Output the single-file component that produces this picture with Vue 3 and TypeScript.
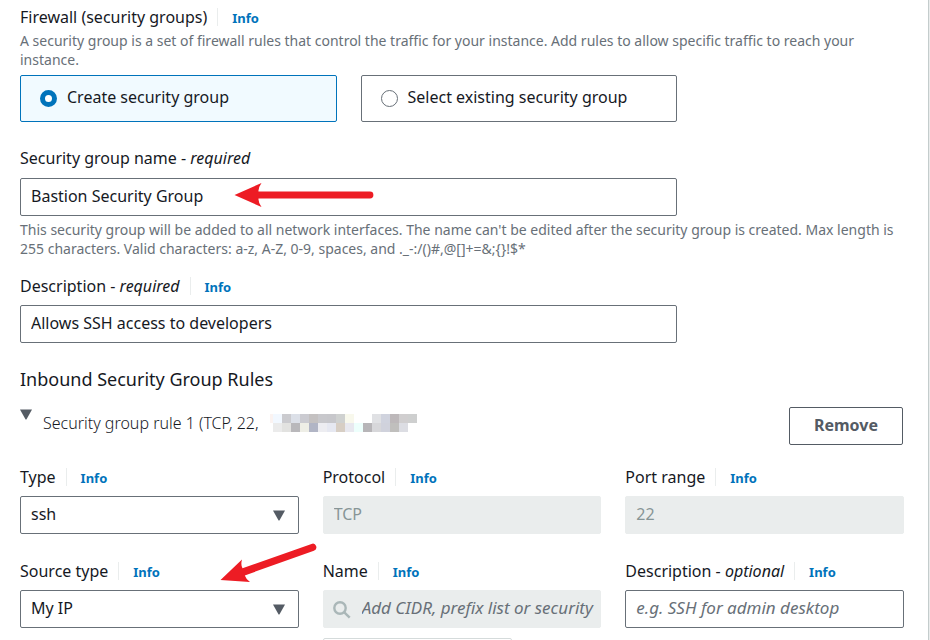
<script setup lang="ts">
import { ref } from 'vue'

const groupMode = ref<'create' | 'existing'>('create')
const groupName = ref('Bastion Security Group')
const groupDescription = ref('Allows SSH access to developers')
const ruleType = ref('ssh')
const sourceType = ref('My IP')
const ruleDescription = ref('')

interface Cell {
  x: number
  y: number
  w: number
  fill: string
}

// Redacted source address: two rows of 9px blocks after a 3px sliver.
const upper = ['#f2f8ff', '#cbcbcf', '#dce0e8', '#cbcbd1', '#c4c1c1', '#c8c8cc', '#c7c7cb', '#cfd1d0', '#f8f8ec', '', '', '#e0e1e4', '#d0d3de', '#bdb8ba', '#d0cecf', '#cecfcf']
const lower = ['#ebebeb', '#e2e2e0', '#b9b8bb', '#eeeee6', '#b1b5c5', '#ededf1', '#e6e8f1', '#d7cec4', '#e8e8ef', '#edfffc', '#b7b5b8', '#d7d7da', '#d0d2dc', '#c0bfbd', '#dcdde3', '']
const toCells = (row: string[], y: number): Cell[] =>
  row.map((fill, i) => ({ x: 3 + i * 9, y, w: 9, fill })).filter((c) => c.fill)
const cells: Cell[] = [{ x: 0, y: 0, w: 3, fill: '#fbf3f1' }, ...toCells(upper, 0), ...toCells(lower, 9)]
</script>

<template>
  <main class="panel">
    <fieldset class="group">
      <legend class="label-row">
        <span>Firewall (security groups)</span>
        <a class="info" href="#firewall">Info</a>
      </legend>
      <p class="hint">
        A security group is a set of firewall rules that control the traffic for your instance. Add rules to allow
        specific traffic to reach your instance.
      </p>
      <div class="tiles">
        <label class="tile" :class="{ selected: groupMode === 'create' }">
          <input v-model="groupMode" type="radio" name="mode" value="create" />
          <span>Create security group</span>
        </label>
        <label class="tile" :class="{ selected: groupMode === 'existing' }">
          <input v-model="groupMode" type="radio" name="mode" value="existing" />
          <span>Select existing security group</span>
        </label>
      </div>
    </fieldset>

    <section class="name-field">
      <div class="label-row">
        <label for="sg-name">Security group name - <em>required</em></label>
      </div>
      <div class="control wide">
        <input id="sg-name" v-model="groupName" class="box" type="text" />
        <svg class="arrow-name" viewBox="0 0 140 26" aria-hidden="true">
          <path d="M0.5 13 L27.5 1 Q24 6 24.5 9.6 H136 a3.4 3.4 0 0 1 0 6.8 H24.5 Q24 20 27.5 25 Z" />
        </svg>
      </div>
      <p class="hint">
        This security group will be added to all network interfaces. The name can't be edited after the security group
        is created. Max length is 255 characters. Valid characters: a-z, A-Z, 0-9, spaces, and ._-:/()#,@[]+=&amp;;{}!$*
      </p>
    </section>

    <section class="description-field">
      <div class="label-row">
        <label for="sg-desc">Description - <em>required</em></label>
        <a class="info" href="#description">Info</a>
      </div>
      <div class="control wide">
        <input id="sg-desc" v-model="groupDescription" class="box" type="text" />
      </div>
    </section>

    <h2>Inbound Security Group Rules</h2>

    <div class="rule-head">
      <button class="toggle" type="button" aria-expanded="true">
        <svg class="caret" viewBox="0 0 12 11" aria-hidden="true"><path d="M0 0.5 H12 L6.4 10.4 H5.6 Z" /></svg>
        <span class="rule-title">Security group rule 1 (TCP, 22,</span>
        <svg class="mosaic" viewBox="0 0 147 18" shape-rendering="crispEdges" aria-hidden="true">
          <rect v-for="c in cells" :key="`${c.x}-${c.y}`" :x="c.x" :y="c.y" :width="c.w" height="9" :fill="c.fill" />
        </svg>
      </button>
      <button class="remove" type="button">Remove</button>
    </div>

    <div class="grid">
      <div class="field">
        <div class="label-row">
          <label for="type">Type</label>
          <a class="info" href="#type">Info</a>
        </div>
        <div class="control">
          <select id="type" v-model="ruleType" class="box">
            <option>ssh</option>
          </select>
          <svg class="caret in-select" viewBox="0 0 12 11" aria-hidden="true"><path d="M0 0.5 H12 L6.4 10.4 H5.6 Z" /></svg>
        </div>
      </div>
      <div class="field">
        <div class="label-row">
          <label for="protocol">Protocol</label>
          <a class="info" href="#protocol">Info</a>
        </div>
        <div class="control">
          <input id="protocol" class="box" type="text" value="TCP" disabled />
        </div>
      </div>
      <div class="field">
        <div class="label-row">
          <label for="port">Port range</label>
          <a class="info" href="#port">Info</a>
        </div>
        <div class="control">
          <input id="port" class="box" type="text" value="22" disabled />
        </div>
      </div>

      <div class="field">
        <div class="label-row">
          <label for="source">Source type</label>
          <a class="info" href="#source">Info</a>
        </div>
        <div class="control">
          <select id="source" v-model="sourceType" class="box">
            <option>My IP</option>
          </select>
          <svg class="caret in-select" viewBox="0 0 12 11" aria-hidden="true"><path d="M0 0.5 H12 L6.4 10.4 H5.6 Z" /></svg>
        </div>
        <svg class="arrow-source" viewBox="0 0 98 42" aria-hidden="true">
          <path d="M0.5 37 L22 16.5 Q20.5 22 22.5 25.2 L91.5 0.9 a3.6 3.6 0 0 1 2.4 6.8 L24.8 32.4 Q26 36 30 39 Z" />
        </svg>
      </div>
      <div class="field">
        <div class="label-row">
          <label for="cidr">Name</label>
          <a class="info" href="#name">Info</a>
        </div>
        <div class="control">
          <svg class="search" viewBox="0 0 18 18" aria-hidden="true">
            <circle cx="7" cy="7" r="5.7" />
            <path d="M11.3 11.3 L16.7 16.7" />
          </svg>
          <input id="cidr" class="box with-icon" type="text" placeholder="Add CIDR, prefix list or security" disabled />
        </div>
        <div class="token"></div>
      </div>
      <div class="field">
        <div class="label-row">
          <label for="rule-desc">Description - <em>optional</em></label>
          <a class="info" href="#rule-description">Info</a>
        </div>
        <div class="control">
          <input id="rule-desc" v-model="ruleDescription" class="box" type="text" placeholder="e.g. SSH for admin desktop" />
        </div>
      </div>
    </div>
  </main>
</template>

<style>
body {
  margin: 0;
  background: #eaeded;
}
</style>

<style scoped>
* {
  box-sizing: border-box;
}

.panel {
  height: 100vh;
  overflow: hidden;
  margin-right: 1px;
  padding: 6px 24px 0 20px;
  border-right: 1px solid #c4cccc;
  background: #fff;
  color: #16191f;
  font: 16px/22px 'Noto Sans', 'Open Sans', sans-serif;
}

.group {
  min-width: 0;
  margin: 0;
  padding: 0;
  border: 0;
}

.label-row {
  display: flex;
  align-items: center;
  height: 22px;
  padding: 0;
}

.info {
  height: 18px;
  margin-left: 10px;
  padding-left: 14px;
  border-left: 1px solid #eaeded;
  color: #0073bb;
  font-size: 13px;
  font-weight: 700;
  line-height: 20px;
  text-decoration: none;
}

.hint {
  margin: 0;
  color: #687078;
  font-size: 14px;
  line-height: 19px;
}

.group .hint {
  margin: 3px 0 6px;
}

.tiles {
  display: grid;
  grid-template-columns: 1fr 1fr;
  gap: 24px;
  width: calc(75% - 6px);
}

.tile {
  display: flex;
  align-items: center;
  gap: 10px;
  padding: 11px 19px 12px;
  border: 1px solid #687078;
  border-radius: 2px;
}

.tile span {
  padding-bottom: 2px;
  line-height: 20px;
}

.tile.selected {
  border-color: #0073bb;
  background: #f1faff;
}

.tile input {
  appearance: none;
  width: 17px;
  height: 17px;
  margin: 0;
  border: 1px solid #687078;
  border-radius: 50%;
  background: #fff;
}

.tile input:checked {
  border: 5px solid #0073bb;
}

.name-field {
  margin-top: 25px;
}

.control {
  position: relative;
  margin-top: 8px;
}

.name-field .control {
  margin: 9px 0 4px;
}

.description-field {
  margin-top: 17px;
}

.wide {
  width: calc(75% - 6px);
}

.box {
  display: block;
  appearance: none;
  width: 100%;
  height: 38px;
  margin: 0;
  padding: 0 10px 2px;
  border: 1px solid #687078;
  border-radius: 2px;
  background: #fff;
  color: #16191f;
  font: inherit;
}

.box::placeholder {
  color: #687078;
  font-size: 17px;
  font-style: italic;
  opacity: 1;
}

.box:disabled {
  border-color: #eaeded;
  background: #eaeded;
  color: #879596;
}

.box.with-icon {
  padding-right: 4px;
  padding-left: 38px;
}

.caret {
  width: 12px;
  height: 11px;
  fill: #545b64;
}

.in-select {
  position: absolute;
  top: 14px;
  right: 14px;
  pointer-events: none;
}

.search {
  position: absolute;
  top: 11px;
  left: 10px;
  width: 18px;
  height: 18px;
  fill: none;
  stroke: #aab7b8;
  stroke-width: 2.4;
}

.arrow-name,
.arrow-source {
  position: absolute;
  fill: #ed1c24;
  pointer-events: none;
}

.arrow-name {
  top: 4px;
  left: 214px;
  width: 140px;
  height: 26px;
}

.arrow-source {
  top: -17px;
  left: 200px;
  width: 98px;
  height: 42px;
}

h2 {
  margin: 24px 0 16px;
  font-size: 18px;
  font-weight: 400;
  line-height: 24px;
}

.rule-head {
  display: flex;
  align-items: flex-start;
  justify-content: space-between;
  padding-right: 1px;
}

.toggle {
  display: flex;
  align-items: flex-start;
  gap: 11px;
  margin: 0;
  padding: 2px 0 0;
  border: 0;
  background: none;
  color: #16191f;
  font: inherit;
}

.rule-title {
  padding-top: 3px;
  font-weight: 300;
}

.mosaic {
  width: 147px;
  height: 18px;
  margin-top: 5px;
}

.remove {
  height: 38px;
  padding: 0 24px 2px;
  border: 1px solid #545b64;
  border-radius: 2px;
  background: #fff;
  color: #545b64;
  font: inherit;
  font-weight: 700;
}

.grid {
  display: grid;
  grid-template-columns: repeat(3, minmax(0, 1fr));
  gap: 26px 24px;
  margin-top: 21px;
}

.field {
  position: relative;
}

.token {
  width: 189px;
  height: 40px;
  margin-top: 10px;
  border: 1px solid #d5dbdb;
  border-radius: 2px;
}
</style>
